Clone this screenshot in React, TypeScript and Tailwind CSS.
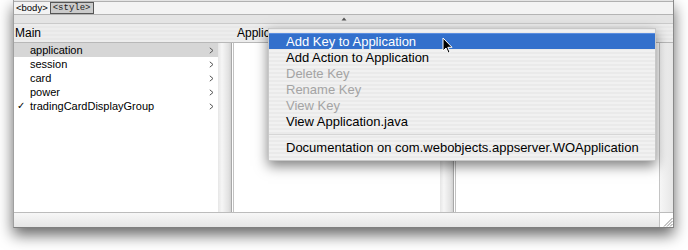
import React from "react";

const sans = { fontFamily: '"Liberation Sans", Arial, sans-serif' };

function Chevron() {
  return (
    <svg width="5" height="7" viewBox="0 0 5 7" className="shrink-0">
      <path d="M0.8 0.8 L4 3.5 L0.8 6.2" fill="none" stroke="#555" strokeWidth="1" />
    </svg>
  );
}

function Strip() {
  return (
    <div className="flex h-full shrink-0">
      <div className="w-[13px] h-full bg-[linear-gradient(to_right,#e6e6e6,#f6f6f6_30%,#e2e2e2_80%,#d2d2d2)]" />
      <div className="w-px h-full bg-[#a8a8a8]" />
      <div className="w-[1px] h-full bg-white" />
      <div className="w-px h-full bg-[#c2c2c2]" />
    </div>
  );
}

const items = [
  { label: "application", selected: true, check: false },
  { label: "session", selected: false, check: false },
  { label: "card", selected: false, check: false },
  { label: "power", selected: false, check: false },
  { label: "tradingCardDisplayGroup", selected: false, check: true },
];

const menu: { label: string; state: "hi" | "on" | "off" }[] = [
  { label: "Add Key to Application", state: "hi" },
  { label: "Add Action to Application", state: "on" },
  { label: "Delete Key", state: "off" },
  { label: "Rename Key", state: "off" },
  { label: "View Key", state: "off" },
  { label: "View Application.java", state: "on" },
];

export default function App() {
  return (
    <div className="relative w-[688px] h-[250px] bg-white overflow-hidden" style={sans}>
      {/* window */}
      <div className="ml-[13px] w-[661px] h-[228px] flex flex-col border-l border-r border-b border-l-[#a0a0a0] border-r-[#8a8a8a] border-b-[#808080] bg-[#ececec] shadow-[0_7px_14px_rgba(0,0,0,0.6)]">
        <div className="h-px bg-[#e4e4e4]" />
        <div className="h-px bg-[#b0b0b0]" />
        {/* breadcrumb */}
        <div className="h-[12px] bg-[#f3f3f3] flex items-center pl-[2px] gap-[2px]">
          <span className="text-[9.5px] leading-none text-black">&lt;body&gt;</span>
          <span
            className="h-[12px] px-[2px] flex items-center border border-[#555] bg-[#cbcbcb] text-[9px] leading-none text-[#222]"
            style={{ fontFamily: '"Liberation Mono", monospace' }}
          >
            &lt;style&gt;
          </span>
        </div>
        <div className="h-px bg-[#b4b4b4]" />
        {/* splitter */}
        <div className="h-[8px] bg-[#e4e4e4] flex justify-center items-center">
          <svg width="6" height="4" viewBox="0 0 6 4">
            <path d="M0.5 3.5 L3 0.5 L5.5 3.5 Z" fill="#555" />
          </svg>
        </div>
        <div className="h-px bg-[#cacaca]" />
        {/* headers */}
        <div className="h-[18px] flex bg-[repeating-linear-gradient(0deg,#ededed_0px,#ededed_2px,#e8e8e8_2px,#e8e8e8_4px)] text-[12px] text-black">
          <div className="w-[220px] pl-[1px] flex items-center">Main</div>
          <div className="w-[222px] pl-[3px] flex items-center">Application</div>
          <div className="flex-1" />
        </div>
        <div className="h-px bg-[#b8b8b8]" />
        {/* columns */}
        <div className="h-[169px] flex">
          <div className="w-[204px] bg-white text-[11px] text-black">
            {items.map((it) => (
              <div
                key={it.label}
                className={`h-[14px] flex items-center pr-[4px] ${it.selected ? "bg-[#d6d6d6]" : ""}`}
              >
                <span className="w-[16px] pl-[3px] text-[10px] leading-none">{it.check ? "✓" : ""}</span>
                <span className="flex-1 leading-none">{it.label}</span>
                <Chevron />
              </div>
            ))}
          </div>
          <Strip />
          <div className="w-[206px] bg-white" />
          <Strip />
          <div className="flex-1 bg-white" />
          <div className="w-px bg-[#c4c4c4]" />
          <div className="w-[13px] bg-[linear-gradient(to_right,#f6f6f6,#e6e6e6)]" />
        </div>
        <div className="h-px bg-[#bcbcbc]" />
        {/* bottom bar */}
        <div className="h-[14px] flex bg-[linear-gradient(to_bottom,#f7f7f7,#e6e6e6)]">
          <div className="flex-1" />
          <div className="w-[14px] h-full bg-white border-l border-[#c2c2c2] relative">
            <svg width="13" height="14" viewBox="0 0 13 14" className="absolute left-0 top-0">
              <path d="M12.5 5 L4 13.5 M12.5 8 L7 13.5 M12.5 11 L10 13.5" stroke="#8a8a8a" strokeWidth="1" />
            </svg>
          </div>
        </div>
      </div>

      {/* context menu */}
      <div className="absolute left-[268px] top-[28px] w-[388px] pt-[4px] pb-[4px] bg-[repeating-linear-gradient(0deg,#f1f1f1_0px,#f1f1f1_2px,#eaeaea_2px,#eaeaea_4px)] shadow-[0_5px_12px_rgba(0,0,0,0.5)] border border-[#c8c8c8] text-[13px]">
        {menu.map((m) => (
          <div
            key={m.label}
            className={`h-[16px] pl-[17px] flex items-center leading-none ${
              m.state === "hi"
                ? "bg-[#3370cc] text-white border-t border-[#5b8ee0]"
                : m.state === "off"
                ? "text-[#a4a4a4]"
                : "text-black"
            }`}
          >
            {m.label}
          </div>
        ))}
        <div className="h-[10px] flex items-center">
          <div className="h-px w-full bg-[#d6d6d6]" />
        </div>
        <div className="h-[17px] pl-[17px] flex items-center leading-none text-black">
          Documentation on com.webobjects.appserver.WOApplication
        </div>
      </div>

      {/* cursor */}
      <svg width="12" height="18" viewBox="0 0 12 18" className="absolute left-[442px] top-[37px]">
        <path
          d="M1 1 L1 14 L4 11 L6.2 16 L8 15.2 L5.8 10.3 L10 10.3 Z"
          fill="#000"
          stroke="#fff"
          strokeWidth="1"
          strokeLinejoin="round"
        />
      </svg>
    </div>
  );
}
